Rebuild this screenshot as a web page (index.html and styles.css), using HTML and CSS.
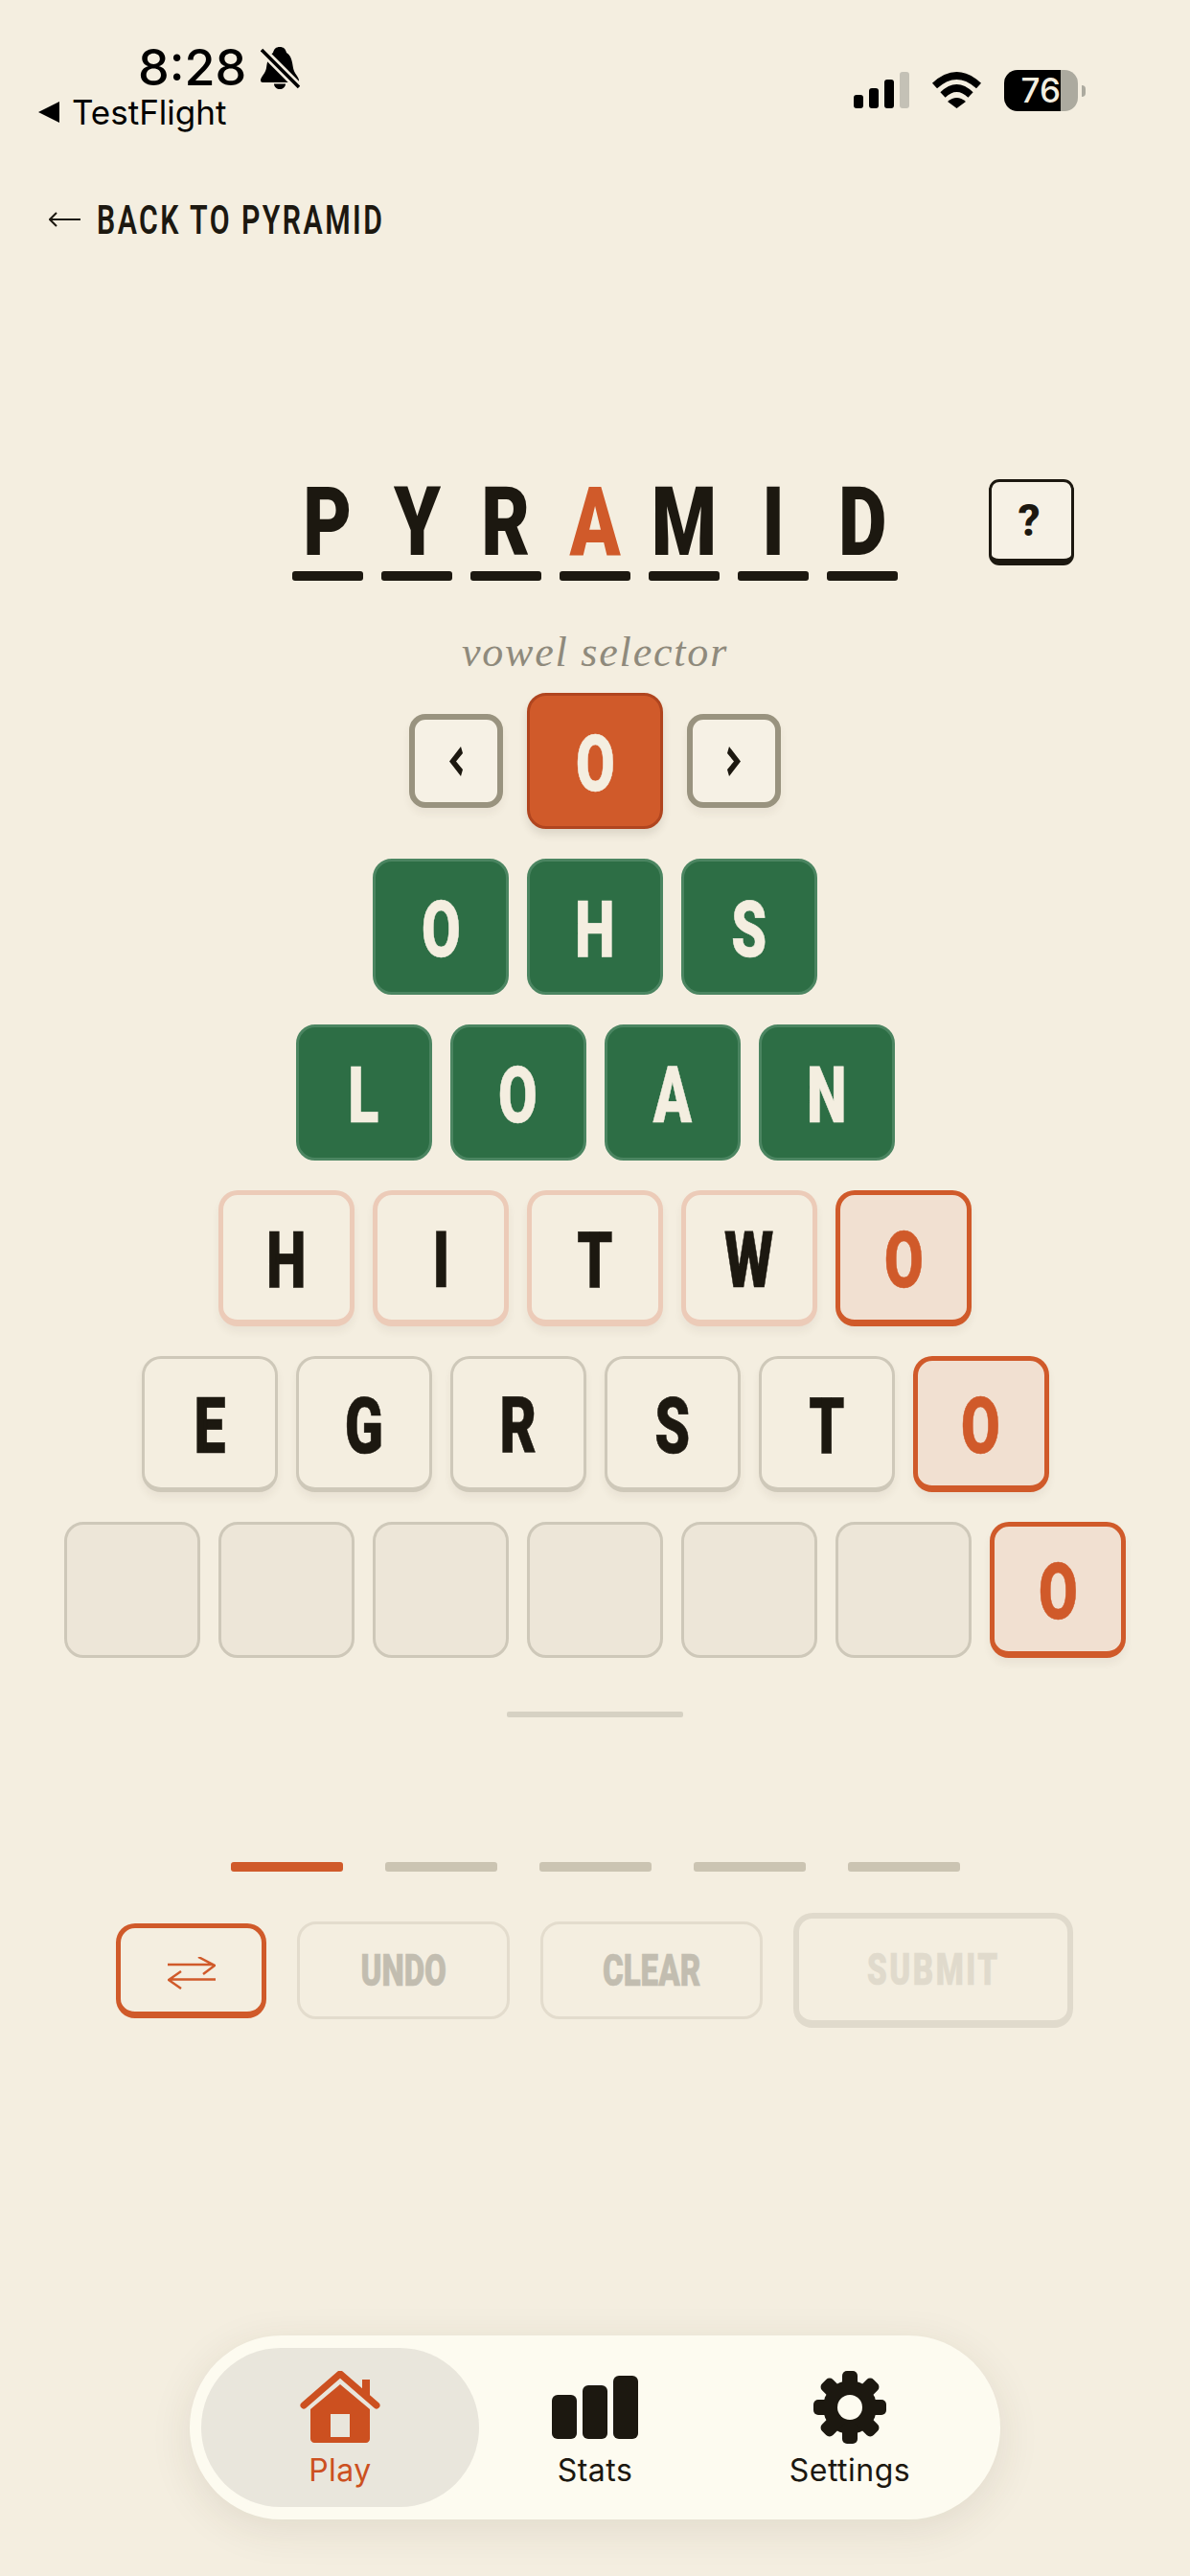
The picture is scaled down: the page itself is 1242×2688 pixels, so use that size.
FILE: index.html
```html
<!DOCTYPE html>
<html lang="en">
<head>
    <meta charset="UTF-8">
    <meta name="viewport" content="width=device-width, initial-scale=1.0">
    <title>Pyramid</title>
    <link rel="stylesheet" href="styles.css">
</head>
<body>
    <div class="page">
        <div class="status-bar">
            <div class="status-left">
                <div class="time-row">
                    <span class="time">8:28</span>
                    <svg class="bell" width="41" height="44" viewBox="0 0 41 44">
                        <path d="M20 0C24 0 26 2 27 6C32 9 33 15 34 22C35 28 40 31 40 35C40 36 39 37 38 37H2C1 37 0 36 0 35C0 31 5 28 6 22C7 15 8 9 13 6C14 2 16 0 20 0Z" fill="#000"/>
                        <path d="M14 38.500H26C26 42 23 44 20 44C17 44 14 42 14 38.500Z" fill="#000"/>
                        <path d="M1 3L40 42" stroke="#f4eee0" stroke-width="9"/>
                        <path d="M1 3L40 42" stroke="#000" stroke-width="3.500"/>
                    </svg>
                </div>
                <div class="back-app">
                    <svg width="22" height="22" viewBox="0 0 22 22"><path d="M22 0V22L0 11Z" fill="#000"/></svg>
                    <span>TestFlight</span>
                </div>
            </div>
            <div class="status-right">
                <div class="signal">
                    <span class="bar bar-1"></span>
                    <span class="bar bar-2"></span>
                    <span class="bar bar-3"></span>
                    <span class="bar bar-4"></span>
                </div>
                <svg class="wifi" width="53" height="38" viewBox="0 0 53 38">
                    <path d="M3.500 14.500Q26.500 -6.500 49.500 14.500" fill="none" stroke="#000" stroke-width="7.500"/>
                    <path d="M12 24Q26.500 10 41 24" fill="none" stroke="#000" stroke-width="7.500"/>
                    <path d="M17 31Q26.500 23 36 31L26.500 38Z" fill="#000"/>
                </svg>
                <div class="battery">
                    <div class="battery-body">
                        <span class="battery-fill">76</span>
                        <span class="battery-empty"></span>
                    </div>
                    <span class="battery-nub"></span>
                </div>
            </div>
        </div>

        <div class="back-link">
            <svg width="33" height="16" viewBox="0 0 33 16">
                <path d="M33 8H1M8 1L1 8L8 15" fill="none" stroke="#1c1810" stroke-width="2"/>
            </svg>
            <span class="back-text">BACK TO PYRAMID</span>
        </div>

        <div class="title-row">
            <div class="title">
                <div class="title-letter"><span>P</span><i></i></div>
                <div class="title-letter"><span>Y</span><i></i></div>
                <div class="title-letter"><span>R</span><i></i></div>
                <div class="title-letter accent"><span>A</span><i></i></div>
                <div class="title-letter"><span>M</span><i></i></div>
                <div class="title-letter"><span>I</span><i></i></div>
                <div class="title-letter"><span>D</span><i></i></div>
            </div>
            <div class="help-cell">
                <button class="help-btn">?</button>
            </div>
        </div>

        <div class="selector-label">vowel selector</div>

        <div class="board">
            <div class="row vowel-row">
                <button class="arrow-btn">
                    <svg width="14" height="31" viewBox="0 0 14 31"><path d="M12 0L0 15.500L12 31L14 24L7 15.500L14 7Z" fill="#1c1810"/></svg>
                </button>
                <div class="tile tile-vowel"><span class="cond">O</span></div>
                <button class="arrow-btn">
                    <svg width="14" height="31" viewBox="0 0 14 31"><path d="M2 0L14 15.500L2 31L0 24L7 15.500L0 7Z" fill="#1c1810"/></svg>
                </button>
            </div>
            <div class="row">
                <div class="tile tile-green"><span class="cond">O</span></div>
                <div class="tile tile-green"><span class="cond">H</span></div>
                <div class="tile tile-green"><span class="cond">S</span></div>
            </div>
            <div class="row">
                <div class="tile tile-green"><span class="cond">L</span></div>
                <div class="tile tile-green"><span class="cond">O</span></div>
                <div class="tile tile-green"><span class="cond">A</span></div>
                <div class="tile tile-green"><span class="cond">N</span></div>
            </div>
            <div class="row">
                <div class="tile tile-active"><span class="cond">H</span></div>
                <div class="tile tile-active"><span class="cond">I</span></div>
                <div class="tile tile-active"><span class="cond">T</span></div>
                <div class="tile tile-active"><span class="cond">W</span></div>
                <div class="tile tile-orange"><span class="cond">O</span></div>
            </div>
            <div class="row">
                <div class="tile tile-plain"><span class="cond">E</span></div>
                <div class="tile tile-plain"><span class="cond">G</span></div>
                <div class="tile tile-plain"><span class="cond">R</span></div>
                <div class="tile tile-plain"><span class="cond">S</span></div>
                <div class="tile tile-plain"><span class="cond">T</span></div>
                <div class="tile tile-orange"><span class="cond">O</span></div>
            </div>
            <div class="row">
                <div class="tile tile-empty"></div>
                <div class="tile tile-empty"></div>
                <div class="tile tile-empty"></div>
                <div class="tile tile-empty"></div>
                <div class="tile tile-empty"></div>
                <div class="tile tile-empty"></div>
                <div class="tile tile-orange"><span class="cond">O</span></div>
            </div>
        </div>

        <div class="divider"></div>

        <div class="progress">
            <span class="step step-on"></span>
            <span class="step"></span>
            <span class="step"></span>
            <span class="step"></span>
            <span class="step"></span>
        </div>

        <div class="actions">
            <button class="action shuffle">
                <svg width="50" height="34" viewBox="0 0 50 34">
                    <path d="M0 8H48M32 0L49 9L37 18" fill="none" stroke="#d05a2a" stroke-width="2.500"/>
                    <path d="M50 23.500H2M14 15L1 24L14 33" fill="none" stroke="#d05a2a" stroke-width="2.500"/>
                </svg>
            </button>
            <button class="action undo"><span class="cond">UNDO</span></button>
            <button class="action clear"><span class="cond">CLEAR</span></button>
            <button class="action submit"><span class="cond">SUBMIT</span></button>
        </div>

        <div class="tab-bar">
            <div class="tab tab-on">
                <div class="tab-icon">
                    <svg width="84" height="75" viewBox="0 0 84 75">
                        <path d="M65 9H73V26H65Z" fill="#cc5020"/>
                        <path d="M4 37L42 4L80 37" fill="none" stroke="#cc5020" stroke-width="7" stroke-linecap="round" stroke-linejoin="round" transform="translate(0 -1)"/>
                        <path d="M42 14L73 40V71C73 73 71 75 69 75H15C13 75 11 73 11 71V40Z" fill="#cc5020"/>
                        <path d="M32 45H52V69H32Z" fill="#e9e6dc"/>
                    </svg>
                </div>
                <span>Play</span>
            </div>
            <div class="tab">
                <div class="tab-icon stats-icon">
                    <span class="stat-bar stat-1"></span>
                    <span class="stat-bar stat-2"></span>
                    <span class="stat-bar stat-3"></span>
                </div>
                <span>Stats</span>
            </div>
            <div class="tab">
                <div class="tab-icon">
                    <svg width="76" height="76" viewBox="-38 -38 76 76">
                        <g fill="#1c1810">
                            <circle r="28"/>
                            <rect x="-8" y="-38" width="16" height="76" rx="5"/>
                            <rect x="-8" y="-38" width="16" height="76" rx="5" transform="rotate(45)"/>
                            <rect x="-8" y="-38" width="16" height="76" rx="5" transform="rotate(90)"/>
                            <rect x="-8" y="-38" width="16" height="76" rx="5" transform="rotate(135)"/>
                        </g>
                        <circle r="13" fill="#fdfbf0"/>
                    </svg>
                </div>
                <span>Settings</span>
            </div>
        </div>
    </div>
</body>
</html>
```

FILE: styles.css
```css
* {
    box-sizing: border-box;
}

body {
    margin: 0;
    background-color: #f4eee0;
    color: #1c1810;
    font-family: "Inter", sans-serif;
}

button {
    padding: 0;
    background: none;
    font: inherit;
    color: inherit;
}

.page {
    width: 1242px;
    height: 2688px;
    display: flex;
    flex-direction: column;
    overflow: hidden;
}

/* no condensed family is installed, so the display letters are squeezed */
.cond {
    display: inline-block;
    transform: scaleX(0.72);
    -webkit-text-stroke: 0.6px currentColor;
}

/* status bar */
.status-bar {
    height: 160px;
    display: flex;
    justify-content: space-between;
    padding: 45px 109px 0 40px;
    color: #000;
}

.time-row {
    display: flex;
    align-items: center;
    gap: 15px;
    margin-left: 104px;
    height: 52px;
}

.time {
    font-size: 52px;
    line-height: 52px;
    font-weight: 500;
}

.back-app {
    display: flex;
    align-items: center;
    gap: 13px;
    font-size: 35px;
    line-height: 40px;
}

.status-right {
    display: flex;
    align-items: flex-start;
    padding-top: 28px;
    gap: 23px;
}

.signal {
    display: flex;
    align-items: flex-end;
    gap: 6px;
    height: 38px;
    margin-top: 2px;
}

.bar {
    width: 10px;
    border-radius: 3px;
    background-color: #000;
}

.bar-1 { height: 14px; }
.bar-2 { height: 21px; }
.bar-3 { height: 30px; }
.bar-4 { height: 38px; background-color: #c4c1b6; }

.wifi {
    margin-top: 2px;
}

.battery {
    display: flex;
    align-items: center;
    gap: 4px;
}

.battery-body {
    display: flex;
    width: 77px;
    height: 43px;
    border-radius: 14px;
    overflow: hidden;
}

.battery-fill {
    width: 59px;
    background-color: #000;
    color: #f4eee0;
    font-size: 35px;
    font-weight: 500;
    line-height: 43px;
    text-align: right;
}

.battery-empty {
    flex: 1;
    background-color: #acaa9f;
}

.battery-nub {
    width: 4px;
    height: 12px;
    border-radius: 0 6px 6px 0;
    background-color: #acaa9f;
}

/* back link */
.back-link {
    height: 138px;
    display: flex;
    align-items: center;
    gap: 17px;
    padding-left: 51px;
}

.back-text {
    display: inline-block;
    transform: scaleX(0.72);
    transform-origin: left center;
    font-family: "Roboto", sans-serif;
    font-size: 42px;
    font-weight: 600;
    letter-spacing: 3.4px;
    white-space: nowrap;
}

/* title */
.title-row {
    display: grid;
    grid-template-columns: 1fr auto 1fr;
    margin-top: 202px;
    height: 106px;
}

.title {
    grid-column: 2;
    display: flex;
    gap: 19px;
}

.title-letter {
    width: 74px;
    display: flex;
    flex-direction: column;
    align-items: center;
    font-family: "Roboto", sans-serif;
    font-size: 100px;
    font-weight: 900;
}

.title-letter span {
    height: 96px;
    line-height: 90px;
    transform: scaleX(0.78);
}

.title-letter i {
    width: 74px;
    height: 10px;
    border-radius: 3px;
    background-color: #1c1810;
}

.title-letter.accent {
    color: #d05a2a;
}

.help-cell {
    grid-column: 3;
    padding-left: 95px;
}

.help-btn {
    width: 89px;
    height: 90px;
    padding-right: 5px;
    border: 3px solid #1c1810;
    border-bottom-width: 7px;
    border-radius: 11px;
    background-color: #f6f1e5;
    font-family: "Roboto", sans-serif;
    font-size: 46px;
    font-weight: 800;
    line-height: 1;
}

.selector-label {
    margin-top: 47px;
    height: 56px;
    line-height: 56px;
    text-align: center;
    font-family: "Liberation Serif", serif;
    font-style: italic;
    font-size: 44px;
    letter-spacing: 1.8px;
    color: #8f8a7c;
}

/* board */
.board {
    display: flex;
    flex-direction: column;
    gap: 31px;
    margin-top: 14px;
}

.row {
    display: flex;
    justify-content: center;
    gap: 19px;
}

.vowel-row {
    align-items: center;
    gap: 25px;
}

.tile {
    width: 142px;
    height: 142px;
    display: flex;
    align-items: center;
    justify-content: center;
    padding-top: 6px;
    border-radius: 20px;
    font-family: "Roboto", sans-serif;
    font-size: 82px;
    font-weight: 900;
}

.tile-vowel {
    background-color: #d05a2a;
    border: 3px solid #b0451f;
    color: #f4eee0;
    box-shadow: 0 6px 8px rgba(60, 50, 30, 0.12);
}

.tile-green {
    background-color: #2d6e45;
    border: 3px solid #4b8561;
    color: #f4eee0;
}

.tile-active {
    background-color: #f4eee0;
    border: 5px solid #eccbb8;
    border-bottom-width: 7px;
    box-shadow: 0 6px 8px rgba(60, 50, 30, 0.06);
}

.tile-orange {
    background-color: #f1e0d1;
    border: 5px solid #d05a2a;
    border-bottom-width: 7px;
    color: #d05a2a;
    box-shadow: 0 6px 8px rgba(60, 50, 30, 0.06);
}

.tile-plain {
    background-color: #f4eee0;
    border: 3px solid #cec8b9;
    border-bottom-width: 5px;
    box-shadow: 0 6px 8px rgba(60, 50, 30, 0.06);
}

.tile-empty {
    background-color: #ede6d8;
    border: 3px solid #cec8b9;
}

.arrow-btn {
    width: 98px;
    height: 98px;
    display: flex;
    align-items: center;
    justify-content: center;
    border: 6px solid #99937f;
    border-radius: 17px;
    background-color: #f6f1e5;
    box-shadow: 0 6px 8px rgba(60, 50, 30, 0.06);
}

.divider {
    width: 184px;
    height: 6px;
    margin: 56px auto 0;
    border-radius: 2px;
    background-color: #d6d1c3;
}

.progress {
    display: flex;
    justify-content: center;
    gap: 44px;
    margin-top: 151px;
}

.step {
    width: 117px;
    height: 10px;
    border-radius: 3px;
    background-color: #cbc4b2;
}

.step-on {
    background-color: #d05a2a;
}

/* actions */
.actions {
    display: flex;
    align-items: center;
    margin: 43px 0 0 121px;
    height: 120px;
}

.action {
    display: flex;
    align-items: center;
    justify-content: center;
    font-family: "Roboto", sans-serif;
    font-size: 46px;
    font-weight: 900;
    border-style: solid;
}

.shuffle {
    width: 157px;
    height: 99px;
    padding-top: 7px;
    border-width: 5px;
    border-bottom-width: 7px;
    border-color: #d05a2a;
    border-radius: 20px;
    margin-right: 32px;
}

.undo, .clear {
    height: 102px;
    border-width: 3px;
    border-color: #e3dccd;
    border-radius: 20px;
    color: #c2bdb0;
}

.undo {
    width: 222px;
    margin-right: 32px;
}

.clear {
    width: 232px;
    margin-right: 32px;
}

.submit {
    width: 292px;
    height: 120px;
    border-width: 6px;
    border-bottom-width: 8px;
    border-color: #e0dacc;
    border-radius: 20px;
    color: #e0dacc;
    letter-spacing: 3.5px;
}

/* tab bar */
.tab-bar {
    display: grid;
    grid-template-columns: 290px 242px 290px;
    width: 846px;
    height: 192px;
    margin: 321px auto 0;
    padding: 13px 12px;
    border-radius: 96px;
    background-color: #fdfbf0;
    box-shadow: 0 10px 44px rgba(60, 50, 30, 0.1);
}

.tab {
    display: flex;
    flex-direction: column;
    align-items: center;
    padding-top: 24px;
    font-size: 32px;
    line-height: 36px;
    letter-spacing: 0.5px;
}

.tab-on {
    background-color: #e9e6dc;
    border-radius: 84px;
    color: #cc5020;
}

.tab-icon {
    height: 75px;
    margin-bottom: 11px;
}

.stats-icon {
    display: flex;
    align-items: flex-end;
    gap: 6px;
    padding-bottom: 4px;
}

.stat-bar {
    width: 26px;
    border-radius: 6px;
    background-color: #1c1810;
}

.stat-1 { height: 46px; }
.stat-2 { height: 56px; }
.stat-3 { height: 66px; }
```
